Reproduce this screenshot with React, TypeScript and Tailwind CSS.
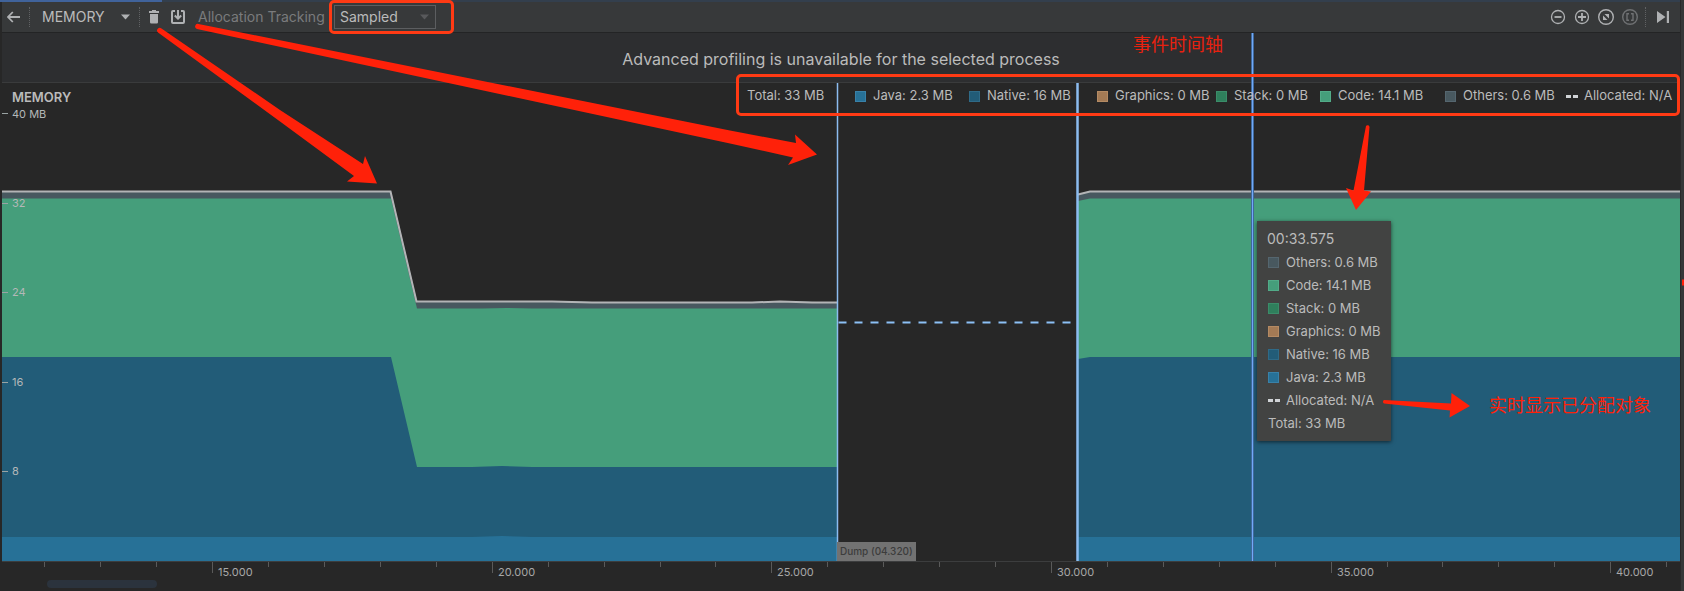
import { ReactNode } from "react";

const COLORS = {
  others: "bg-[#48585f] border-[#55666f]",
  code: "bg-[#459e7b] border-[#52ab88]",
  stack: "bg-[#2f7f5c] border-[#3b8c69]",
  graphics: "bg-[#a37a55] border-[#b48a63]",
  native: "bg-[#225c78] border-[#2f6a87]",
  java: "bg-[#277197] border-[#3981a8]",
};

type Series = { label: string; color?: string; dashed?: boolean };

const LEGEND: Series[] = [
  { label: "Total: 33 MB" },
  { label: "Java: 2.3 MB", color: COLORS.java },
  { label: "Native: 16 MB", color: COLORS.native },
  { label: "Graphics: 0 MB", color: COLORS.graphics },
  { label: "Stack: 0 MB", color: COLORS.stack },
  { label: "Code: 14.1 MB", color: COLORS.code },
  { label: "Others: 0.6 MB", color: COLORS.others },
  { label: "Allocated: N/A", dashed: true },
];

const TOOLTIP: Series[] = [
  { label: "Others: 0.6 MB", color: COLORS.others },
  { label: "Code: 14.1 MB", color: COLORS.code },
  { label: "Stack: 0 MB", color: COLORS.stack },
  { label: "Graphics: 0 MB", color: COLORS.graphics },
  { label: "Native: 16 MB", color: COLORS.native },
  { label: "Java: 2.3 MB", color: COLORS.java },
  { label: "Allocated: N/A", dashed: true },
  { label: "Total: 33 MB" },
];

const CHART_W = 1678;
const CHART_H = 478;
const pct = (v: number, total: number) => `${(v / total) * 100}%`;

const Y_TICKS = [
  { y: 30, label: "40 MB" },
  { y: 119, label: "32" },
  { y: 208, label: "24" },
  { y: 298, label: "16" },
  { y: 387, label: "8" },
];

const SECOND = 55.92;
const X_TICKS = Array.from({ length: 30 }, (_, i) => {
  const x = Math.round(210.2 + (i - 3) * SECOND);
  const major = i % 5 === 3;
  return { x, major, label: major ? `${12 + i}.000` : "" };
});

function SeriesItem({ label, color, dashed }: Series) {
  return (
    <li className="flex items-center gap-[7px] whitespace-nowrap">
      {color && <span className={`size-[11px] shrink-0 border ${color}`} />}
      {dashed && (
        <span className="flex w-[11px] shrink-0 gap-[2px]">
          <span className="h-[3px] w-[5px] shrink-0 bg-[#d0d3d6]" />
          <span className="h-[3px] w-[5px] shrink-0 bg-[#d0d3d6]" />
        </span>
      )}
      <span>{label}</span>
    </li>
  );
}

function IconButton({ label, children, disabled }: { label: string; children: ReactNode; disabled?: boolean }) {
  return (
    <button type="button" aria-label={label} disabled={disabled} className="flex size-6 items-center justify-center text-[#afb1b3] disabled:text-[#6f7173]">
      {children}
    </button>
  );
}

function Separator() {
  return <span className="h-5 w-px border-l border-dotted border-[#606264]" />;
}

function Toolbar() {
  return (
    <header className="flex h-[31px] items-center border-b border-[#232425] bg-[#37393a] pr-[5px]">
      <IconButton label="Back">
        <svg width="14" height="12" viewBox="0 0 14 12" fill="none" stroke="currentColor" strokeWidth="1.800">
          <path d="M13 6H1.300M5.800 1 1 6l4.800 5" />
        </svg>
      </IconButton>
      <span className="w-[3px]" />
      <Separator />
      <button type="button" className="ml-3 flex w-[88px] items-center justify-between text-sm text-[#bbbbbb]">
        MEMORY
        <svg width="9" height="6" viewBox="0 0 9 6" fill="#afb1b3"><path d="M0 .5h9L4.500 5.500z" /></svg>
      </button>
      <span className="w-[9px]" />
      <Separator />
      <span className="w-[2px]" />
      <IconButton label="Force garbage collection">
        <svg width="12" height="14" viewBox="0 0 12 14" fill="currentColor">
          <path d="M4 0h4v1h3v2H1V1h3zM2 4h8v8.200a1.300 1.300 0 0 1-1.300 1.300H3.300A1.300 1.300 0 0 1 2 12.200z" />
        </svg>
      </IconButton>
      <IconButton label="Dump Java heap">
        <svg width="16" height="16" viewBox="0 0 16 16" fill="none" stroke="currentColor" strokeWidth="2">
          <path d="M5 2H3a1 1 0 0 0-1 1v10a1 1 0 0 0 1 1h10a1 1 0 0 0 1-1V3a1 1 0 0 0-1-1h-2M8 1v8M4.800 6.500 8 9.700l3.200-3.200" />
        </svg>
      </IconButton>
      <label htmlFor="tracking" className="ml-2 w-[131px] text-sm whitespace-nowrap text-[#7a7b7d]">
        Allocation Tracking
      </label>
      <div className="relative z-10 flex h-[34px] w-[125px] items-center rounded-[5px] border-3 border-[#ff3a14] pl-[2px]">
        <div className="relative">
          <select id="tracking" defaultValue="Sampled" className="block h-6 w-[102px] appearance-none border border-[#5c5e60] bg-transparent pl-[5px] text-sm text-[#bbbbbb]">
            <option>Sampled</option>
            <option>Full</option>
            <option>None</option>
          </select>
          <svg className="pointer-events-none absolute top-[9px] right-[7px]" width="9" height="6" viewBox="0 0 9 6" fill="#58595b"><path d="M0 .5h9L4.500 5.500z" /></svg>
        </div>
      </div>
      <div className="ml-auto flex items-center">
        <IconButton label="Zoom out">
          <svg width="16" height="16" viewBox="0 0 16 16" fill="none" stroke="currentColor"><circle cx="8" cy="8" r="6.500" strokeWidth="1.300" /><path d="M4.500 8h7" strokeWidth="1.800" /></svg>
        </IconButton>
        <IconButton label="Zoom in">
          <svg width="16" height="16" viewBox="0 0 16 16" fill="none" stroke="currentColor"><circle cx="8" cy="8" r="6.500" strokeWidth="1.300" /><path d="M4 8h8M8 4v8" strokeWidth="1.800" /></svg>
        </IconButton>
        <IconButton label="Reset zoom">
          <svg width="16" height="16" viewBox="0 0 16 16"><circle cx="8" cy="8" r="7.300" fill="none" stroke="currentColor" strokeWidth="1.400" /><path d="M6.500 5H11v4.500zM5 6.500 9.500 11H5z" fill="currentColor" /></svg>
        </IconButton>
        <IconButton label="Zoom to selection" disabled>
          <svg width="16" height="16" viewBox="0 0 16 16" fill="none" stroke="currentColor"><circle cx="8" cy="8" r="7.300" strokeWidth="1.400" /><path d="M7 4.800H5v6.400h2M9 4.800h2v6.400H9" strokeWidth="1.400" /></svg>
        </IconButton>
        <span className="w-[3px]" />
        <Separator />
        <span className="w-[5px]" />
        <IconButton label="Go to live">
          <svg width="12" height="12" viewBox="0 0 12 12" fill="currentColor"><path d="M0 0l8.500 6L0 12zM9.800 0H12v12H9.800z" /></svg>
        </IconButton>
      </div>
    </header>
  );
}

function MemoryChart() {
  return (
    <svg className="absolute inset-0 size-full" viewBox={`0 0 ${CHART_W} ${CHART_H}`} preserveAspectRatio="none">
      <path fill="#48585f" d="M0 108H389L415 218H560L590 219H750L780 218 815 219H835V478H0zM1076 112 1088 108H1678V478H1076z" />
      <path fill="#459e7b" d="M0 115.500H389L415 225.500H480L505 225 530 225.500H835V478H0zM1076 118 1088 115.500H1678V478H1076z" />
      <path fill="#225c78" d="M0 274H389L415 384H470L500 383 530 384H835V478H0zM1076 276 1088 274H1678V478H1076z" />
      <path fill="#277197" d="M0 454H470L500 453 530 454H835V478H0zM1076 454H1678V478H1076z" />
      <path fill="none" stroke="#b3b4b6" strokeWidth="2" d="M0 108.500H388.500L414.500 218.500H550L590 219.500H750L778 218.500 810 219.500H835M1076 111.500 1088 108.500H1678" />
      <path fill="none" stroke="#8cc0f5" strokeWidth="2" strokeDasharray="8 8" d="M836.500 239.500H1076" />
      <path fill="none" stroke="#8cbcf0" strokeWidth="1.500" d="M835.500 0V478" />
      <path fill="none" stroke="#8cbcf0" strokeWidth="2.500" d="M1075.500 0V478" />
    </svg>
  );
}

function Annotations() {
  return (
    <svg className="pointer-events-none absolute inset-0 z-30 size-full" viewBox="0 0 1684 591" preserveAspectRatio="none" fill="#ff2109">
      <path d="M161.500 28.500 280 110 363 164 365 156 377 183.500 347 181.500 354 176 280 121.500 158 32.500A2.500 2.500 0 0 1 161.500 28.500z" />
      <path d="M198.500 24 730 130.500 796 143 795 134.500 817 154.500 788 165 793 157.500 730 143.500 197 29A2.500 2.500 0 0 1 198.500 24z" />
      <path d="M1369.500 127 1364 190.500 1371 191.500 1356 210 1346 188 1353.500 190.500 1366 126A2 2 0 0 1 1369.500 127z" />
      <path d="M1384 400 1451 403.500 1451.500 393 1470 406 1449.500 417.500 1450 410.500 1384 403.500A2 2 0 0 1 1384 400z" />
      <path d="M1682 279.500h2v6h-2z" />
    </svg>
  );
}

export default function App() {
  return (
    <div className="relative flex h-screen min-h-[480px] flex-col overflow-hidden bg-[#272727] pr-1 pb-[2px] pl-[2px] font-[Inter,'Noto_Sans_CJK_SC',sans-serif] text-[#bbbbbb]">
      <div className="absolute inset-y-0 right-0 w-1 border-l border-[#29292a] bg-[#353738]" />
      <div className="-ml-[2px] h-[2px] shrink-0 bg-[#333f4d]">
        <div className="h-full w-[162px] bg-[#40639b]" />
      </div>
      <Toolbar />

      <div className="relative flex h-[50px] shrink-0 items-center justify-center border-b border-[#3a3b3c] bg-[#2d2e30] pt-[2px] text-base">
        Advanced profiling is unavailable for the selected process
      </div>

      <main className="relative min-h-0 flex-1">
        <MemoryChart />
        <h1 className="absolute top-[4px] left-[10px] text-[13px] leading-5 font-semibold">MEMORY</h1>
        {Y_TICKS.map((t) => (
          <div key={t.label} className="absolute left-0 flex h-4 -translate-y-1/2 items-center gap-1 text-[11px] text-[#b4b8b8]" style={{ top: pct(t.y + 1, CHART_H) }}>
            <span className="h-px w-[6px] bg-[#9aa3a3]" />
            {t.label}
          </div>
        ))}

        <div className="absolute bottom-0 flex h-[19px] items-center bg-[#727272] px-[3px] text-[10px] font-medium text-[#3c3c3c]" style={{ left: pct(835, CHART_W) }}>
          Dump (04.320)
        </div>

        <div className="absolute -top-[50px] bottom-0 w-[3px] border-x border-[#40699c] bg-[#71a9f8]" style={{ left: pct(1249, CHART_W) }} />

        <ul className="absolute -top-[9px] right-0 z-10 grid h-[42px] grid-cols-[108px_114px_128px_119px_104px_125px_121px_111px] items-center rounded-[5px] border-3 border-[#ff3a14] pt-[2px] pl-[8px] text-[13px]">
          {LEGEND.map((s) => <SeriesItem key={s.label} {...s} />)}
        </ul>

        <section className="absolute z-20 w-[134px] bg-[#424342] pt-[9px] pb-[6px] pl-[10px] shadow-[0_1px_4px_rgba(0,0,0,0.6)]" style={{ left: pct(1255, CHART_W), top: pct(138, CHART_H) }}>
          <h2 className="mb-[3px] text-sm leading-[18px]">00:33.575</h2>
          <ul className="flex flex-col pl-px text-[13px] leading-[23px]">
            {TOOLTIP.map((s) => <SeriesItem key={s.label} {...s} />)}
          </ul>
        </section>

        <p className="absolute -top-[50px] text-[18px] leading-6 whitespace-nowrap text-[#e8210f]" style={{ left: pct(1131, CHART_W) }}>事件时间轴</p>
        <p className="absolute text-[18px] leading-6 whitespace-nowrap text-[#ff2109]" style={{ left: pct(1487, CHART_W), top: pct(311, CHART_H) }}>实时显示已分配对象</p>
      </main>

      <footer className="relative h-7 shrink-0 border-t border-[#3c3d3e]">
        {X_TICKS.map((t) => (
          <div key={t.x} className="absolute top-0 flex gap-[5px] text-[11px] leading-[21px] text-[#a8a8a8]" style={{ left: pct(t.x, CHART_W) }}>
            <span className={t.major ? "h-[11px] w-px bg-[#5a5a5a]" : "h-[5px] w-px bg-[#5a5a5a]"} />
            {t.label}
          </div>
        ))}
        <div className="absolute bottom-[1px] left-[45px] h-2 w-[110px] rounded-full bg-[#2b333d]" />
      </footer>

      <Annotations />
    </div>
  );
}
